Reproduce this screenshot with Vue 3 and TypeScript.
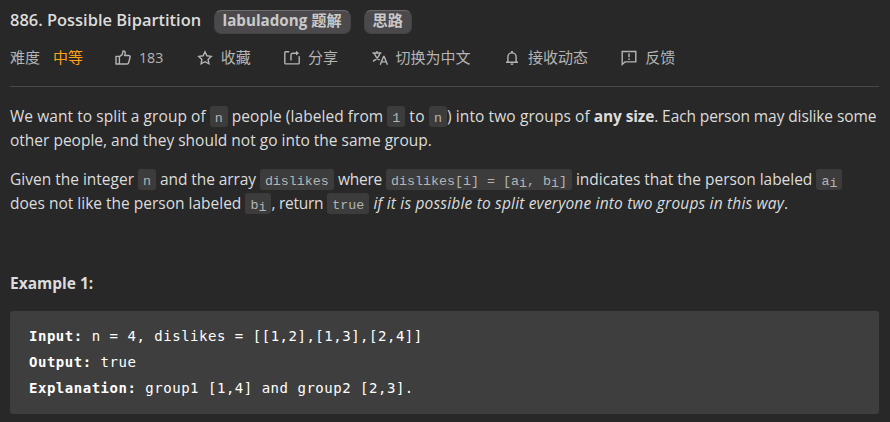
<script setup lang="ts">
interface Action {
  icon: string
  label: string
}

const badges: string[] = ['labuladong 题解', '思路']
const actions: Action[] = [
  { icon: 'like', label: '183' },
  { icon: 'star', label: '收藏' },
  { icon: 'share', label: '分享' },
  { icon: 'translate', label: '切换为中文' },
  { icon: 'bell', label: '接收动态' },
  { icon: 'feedback', label: '反馈' },
]
</script>

<template>
  <main class="problem">
    <header class="heading">
      <h1 class="title">886. Possible Bipartition</h1>
      <span v-for="badge in badges" :key="badge" class="badge">{{ badge }}</span>
    </header>

    <div class="toolbar">
      <span class="muted">难度</span>
      <span class="level">中等</span>
      <span v-for="a in actions" :key="a.icon" class="action">
        <svg class="icon" viewBox="0 0 16 16" fill="none" stroke="currentColor" stroke-width="1.4">
          <g v-if="a.icon === 'like'" stroke-linejoin="round">
            <path d="M4.4 6.4H1v7.6h3.4zM4.4 6.6 7.2 4.6 8 1.2c1.5-.5 2.4.5 2.2 2L9.6 5.5h4c1.1 0 1.7.8 1.5 1.8l-1.5 5.5c-.2.8-.7 1.2-1.5 1.2H4.4" />
          </g>
          <path v-else-if="a.icon === 'star'" stroke-linejoin="miter" d="m8 1.8 1.9 4 4.3.6-3.1 3 .8 4.4L8 11.7l-3.9 2.1.8-4.4-3.1-3 4.3-.6z" />
          <g v-else-if="a.icon === 'share'">
            <path d="M5.2 1.7H1.8q-1 0-1 1v10.2q0 1 1 1h12.4q1 0 1-1V6.2M7 10.4V5.2q0-2 2-2h4.3" />
            <path d="m12 .8 3 2.4-3 2.4z" fill="currentColor" stroke="none" />
          </g>
          <g v-else-if="a.icon === 'translate'">
            <path d="M.4 3h9M4.9 1v2M7.9 3.2C7 6.6 4.5 9.4.9 11.3M2.3 3.4c.9 2.5 2.8 4.9 5.3 6.7M8.2 14.8l3.4-8.4h.5l3.4 8.4M9.4 11.9h4.9" />
          </g>
          <g v-else-if="a.icon === 'bell'">
            <path d="M3.9 12V7a4.1 4.1 0 0 1 8.2 0v5M2 12.3h12" />
            <path d="M7.1 1h1.8v2H7.1zM6.5 13.4h3q0 1.6-1.5 1.6t-1.5-1.6" fill="currentColor" stroke="none" />
          </g>
          <g v-else>
            <path d="M1.2 1.5h13.6v10.4H4L1.2 14.4z" />
            <path d="M8 3.4v3.8M8 8.4V10" stroke-width="1.5" />
          </g>
        </svg>
        <span :class="a.icon === 'like' ? 'count' : 'label'">{{ a.label }}</span>
      </span>
    </div>

    <section class="body">
      <p>
        <span class="r1">We want to split a group of</span> <code>n</code> <span class="r1">people (labeled from</span> <code>1</code> <span class="r7">to</span> <code>n</code><span class="r2">) into two groups of</span> <b class="r3">any size</b><span class="r4">. Each person may dislike some</span><br />
        other people, and they should not go into the same group.
      </p>
      <p>
        Given the integer <code>n</code> <span class="r4">and the array</span> <code>dislikes</code> <span class="r5">where</span> <code>dislikes[i] = [a<sub>i</sub>, b<sub>i</sub>]</code> <span class="r6">indicates that the person labeled</span> <code>a<sub>i</sub></code><br />
        does not like the person labeled <code>b<sub>i</sub></code><span class="r5">, return</span> <code>true</code> <em>if it is possible to split everyone into two groups in this way</em>.
      </p>
      <p class="example"><b>Example 1:</b></p>
      <pre><b>Input:</b> n = 4, dislikes = [[1,2],[1,3],[2,4]]
<b>Output:</b> true
<b>Explanation:</b> group1 [1,4] and group2 [2,3].</pre>
    </section>
  </main>
</template>

<style>
body {
  background: #282828;
}
</style>

<style scoped>
.problem {
  box-sizing: border-box;
  width: 890px;
  height: 422px;
  padding: 10px 11px 0 10px;
  overflow: hidden;
  background: #282828;
  color: #dcdcdc;
  font-family: "Open Sans", "Noto Sans CJK SC", sans-serif;
  font-size: 15.5px;
  line-height: 24px;
}
.heading {
  display: flex;
  height: 24px;
}
.title {
  width: 204px;
  margin: 0;
  font-size: 16.45px;
  font-weight: 600;
  line-height: 20px;
  white-space: nowrap;
}
.badge {
  box-sizing: border-box;
  height: 24px;
  margin-right: 13px;
  padding: 0 8.5px 0 7.5px;
  border: 1px solid #444345;
  border-top: 1px solid #6c6a6d;
  border-radius: 7px;
  background: #4b494c;
  color: #c9c9c9;
  font-size: 15.2px;
  font-weight: 700;
  line-height: 19px;
  white-space: nowrap;
}
.toolbar {
  display: flex;
  align-items: center;
  box-sizing: border-box;
  height: 53px;
  padding-bottom: 4px;
  border-bottom: 1px solid #484848;
  color: #b4b4b4;
  font-size: 15px;
  line-height: 22px;
  white-space: nowrap;
}
.muted,
.level,
.label {
  margin-top: -2px;
}
.level {
  margin-left: 13px;
  margin-right: -1.5px;
  color: #ffa119;
}
.action {
  display: flex;
  align-items: center;
  gap: 7.8px;
  margin-left: 33.6px;
}
.icon {
  width: 16px;
  height: 16px;
}
.count {
  font-size: 14.2px;
}
.body {
  padding-top: 17px;
  white-space: nowrap;
}
p {
  margin: 0 0 15px;
}
code {
  padding: 5px 5px 1px;
  border-radius: 3px;
  background: #3c3c3c;
  color: #b4b4b4;
  font: 13.33px/1 "Liberation Mono", monospace;
}
sub {
  position: relative;
  top: 2px;
  font-size: inherit;
  line-height: 0;
  vertical-align: baseline;
}
em {
  letter-spacing: 0.18px;
}
.r1 { letter-spacing: 0.06px; }
.r2 { letter-spacing: 0.1px; }
.r3 { letter-spacing: -0.15px; }
.r4 { letter-spacing: -0.1px; }
.r5 { letter-spacing: -0.25px; }
.r6 { letter-spacing: -0.02px; }
.r7 { letter-spacing: 0.4px; }
.example {
  margin: 56px 0 16px;
}
pre {
  box-sizing: border-box;
  height: 103px;
  margin: 0;
  padding: 12px 19px;
  border-radius: 3px;
  background: #3e3e3e;
  color: #fff;
  font: 14px/26px "DejaVu Sans Mono", monospace;
  letter-spacing: 0.52px;
}
</style>
